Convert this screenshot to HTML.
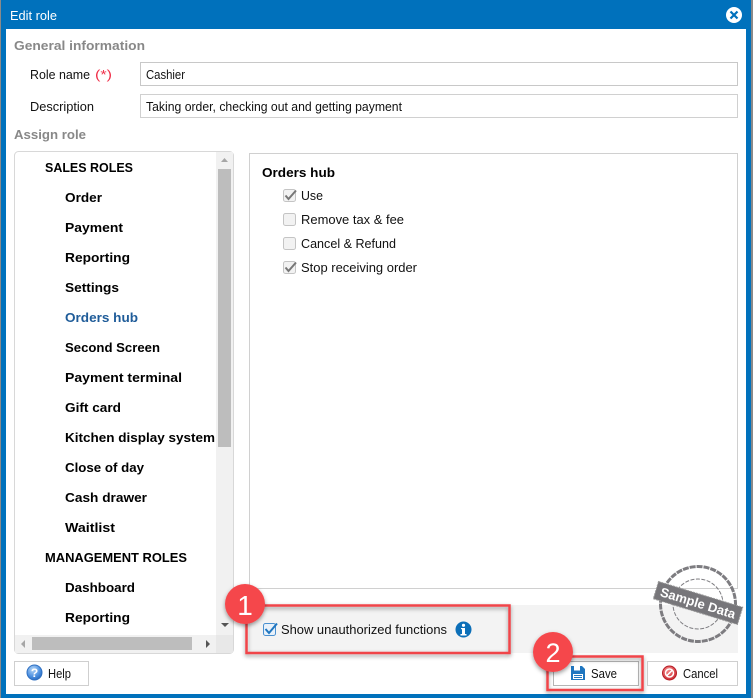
<!DOCTYPE html>
<html><head><meta charset="utf-8"><title>Edit role</title>
<style>
html,body{margin:0;padding:0;width:753px;height:698px;overflow:hidden;background:#fff}
svg{display:block}
text{font-family:"Liberation Sans",sans-serif;font-size:12.500px;fill:#111}
.b{font-weight:bold;font-size:13px;fill:#000}
.g{font-weight:bold;font-size:13px;fill:#888}
</style></head><body>
<svg width="753" height="698" viewBox="0 0 753 698" xmlns="http://www.w3.org/2000/svg">
<defs>
<filter id="sh" x="-20%" y="-20%" width="140%" height="140%"><feDropShadow dx="0" dy="2" stdDeviation="2" flood-color="#000" flood-opacity=".4"/></filter>
<radialGradient id="q" cx=".4" cy=".3" r=".8"><stop offset="0" stop-color="#b5d6f7"/><stop offset=".6" stop-color="#4b8fe0"/><stop offset="1" stop-color="#1f5fb5"/></radialGradient>
<radialGradient id="c" cx=".4" cy=".3" r=".8"><stop offset="0" stop-color="#f58a8a"/><stop offset="1" stop-color="#c8222a"/></radialGradient>
</defs>
<rect width="753" height="698" fill="#8a8a8a"/>
<rect x="1" y="0" width="750" height="698" fill="#0071bc"/>
<rect x="6" y="29" width="740" height="665" fill="#fff"/>
<text x="10" y="20" style="font-size:13px;fill:#fff" textLength="47" lengthAdjust="spacingAndGlyphs">Edit role</text>
<circle cx="734" cy="15" r="8" fill="#fff"/>
<path d="M730.500 11.500L737.500 18.500M737.500 11.500L730.500 18.500" stroke="#0071bc" stroke-width="2.200"/>

<text class="g" x="14" y="50" textLength="131" lengthAdjust="spacingAndGlyphs">General information</text>
<text x="30" y="79" textLength="60" lengthAdjust="spacingAndGlyphs">Role name</text>
<text x="95" y="79" style="fill:#f0304a" textLength="17" lengthAdjust="spacingAndGlyphs">(*)</text>
<rect x="140.500" y="62.500" width="597" height="23" fill="#fff" stroke="#c8c8c8"/>
<text x="146" y="79" textLength="39" lengthAdjust="spacingAndGlyphs">Cashier</text>
<text x="30" y="111" textLength="64" lengthAdjust="spacingAndGlyphs">Description</text>
<rect x="140.500" y="94.500" width="597" height="23" fill="#fff" stroke="#d0d0d0"/>
<text x="146" y="111" textLength="256" lengthAdjust="spacingAndGlyphs">Taking order, checking out and getting payment</text>
<text class="g" x="14" y="139" textLength="72" lengthAdjust="spacingAndGlyphs">Assign role</text>

<!-- left list -->
<rect x="14.500" y="151.500" width="219" height="502" rx="4" fill="#fff" stroke="#d8d8d8"/>
<rect x="216" y="152" width="17" height="483" fill="#f1f1f1"/>
<rect x="15" y="635" width="218" height="18" fill="#f1f1f1"/>
<rect x="216" y="635" width="17" height="18" fill="#e8e8e8"/>
<rect x="218" y="169" width="13" height="278" fill="#bdbdbd"/>
<rect x="32" y="637" width="160" height="13" fill="#bdbdbd"/>
<path d="M221 162L228 162L224.500 158Z" fill="#a6a6a6"/>
<path d="M221 623L229 623L225 627Z" fill="#555"/>
<path d="M25 640V648L21 644Z" fill="#a6a6a6"/>
<path d="M206 640V648L210 644Z" fill="#555"/>
<text class="b" x="45" y="172" textLength="88" lengthAdjust="spacingAndGlyphs">SALES ROLES</text>
<text class="b" x="65" y="202" textLength="37" lengthAdjust="spacingAndGlyphs">Order</text>
<text class="b" x="65" y="232" textLength="58" lengthAdjust="spacingAndGlyphs">Payment</text>
<text class="b" x="65" y="262" textLength="65" lengthAdjust="spacingAndGlyphs">Reporting</text>
<text class="b" x="65" y="292" textLength="54" lengthAdjust="spacingAndGlyphs">Settings</text>
<text class="b" x="65" y="322" textLength="73" lengthAdjust="spacingAndGlyphs" style="fill:#1f5c99">Orders hub</text>
<text class="b" x="65" y="352" textLength="95" lengthAdjust="spacingAndGlyphs">Second Screen</text>
<text class="b" x="65" y="382" textLength="117" lengthAdjust="spacingAndGlyphs">Payment terminal</text>
<text class="b" x="65" y="412" textLength="56" lengthAdjust="spacingAndGlyphs">Gift card</text>
<text class="b" x="65" y="442" textLength="150" lengthAdjust="spacingAndGlyphs">Kitchen display system</text>
<text class="b" x="65" y="472" textLength="79" lengthAdjust="spacingAndGlyphs">Close of day</text>
<text class="b" x="65" y="502" textLength="82" lengthAdjust="spacingAndGlyphs">Cash drawer</text>
<text class="b" x="65" y="532" textLength="50" lengthAdjust="spacingAndGlyphs">Waitlist</text>
<text class="b" x="45" y="562" textLength="142" lengthAdjust="spacingAndGlyphs">MANAGEMENT ROLES</text>
<text class="b" x="65" y="592" textLength="70" lengthAdjust="spacingAndGlyphs">Dashboard</text>
<text class="b" x="65" y="622" textLength="65" lengthAdjust="spacingAndGlyphs">Reporting</text>

<!-- right panel -->
<rect x="249.500" y="153.500" width="488" height="435" fill="#fff" stroke="#d0d0d0"/>
<rect x="249" y="605" width="489" height="48" fill="#f3f3f3"/>
<text class="b" x="262" y="177" textLength="73" lengthAdjust="spacingAndGlyphs">Orders hub</text>
<g fill="#f2f2f2" stroke="#c4c4c4">
<rect x="283.500" y="189.500" width="12" height="12" rx="2"/>
<rect x="283.500" y="213.500" width="12" height="12" rx="2"/>
<rect x="283.500" y="237.500" width="12" height="12" rx="2"/>
<rect x="283.500" y="261.500" width="12" height="12" rx="2"/>
</g>
<path d="M285.500 195.500L288.500 199L296 190.500M285.500 267.500L288.500 271L296 262.500" fill="none" stroke="#777" stroke-width="2"/>
<text x="301" y="200" textLength="22" lengthAdjust="spacingAndGlyphs">Use</text>
<text x="301" y="224" textLength="103" lengthAdjust="spacingAndGlyphs">Remove tax &amp; fee</text>
<text x="301" y="248" textLength="95" lengthAdjust="spacingAndGlyphs">Cancel &amp; Refund</text>
<text x="301" y="272" textLength="116" lengthAdjust="spacingAndGlyphs">Stop receiving order</text>

<!-- show unauthorized -->
<rect x="263.500" y="623.500" width="12" height="12" rx="2" fill="#e8f1fa" stroke="#4a90d0"/>
<path d="M265.500 629L269 633L277 623.500" fill="none" stroke="#1f76c0" stroke-width="2"/>
<text x="281" y="634" textLength="166" lengthAdjust="spacingAndGlyphs">Show unauthorized functions</text>
<circle cx="463.500" cy="629.500" r="8" fill="#0c6fb8"/>
<rect x="462" y="628" width="3" height="6.500" fill="#fff"/><rect x="460.500" y="634" width="6" height="1.500" fill="#fff"/><rect x="461" y="628" width="3" height="1.200" fill="#fff"/>
<circle cx="463.500" cy="625.300" r="1.600" fill="#fff"/>

<!-- stamp -->
<g fill="none" stroke="#7d7c80">
<circle cx="698" cy="604" r="37.500" stroke-width="3" stroke-dasharray="6 1"/>
<circle cx="698" cy="604" r="25" stroke-width="1" stroke-dasharray="4 1.500"/>
</g>
<g transform="rotate(17 698 603)">
<rect x="654" y="594" width="88" height="18" fill="#77767a" stroke="#999" stroke-dasharray="2 1"/>
<text x="698" y="607.500" text-anchor="middle" style="font-weight:bold;font-size:13px;fill:#fff" textLength="78" lengthAdjust="spacingAndGlyphs">Sample Data</text>
</g>

<!-- buttons -->
<rect x="14.500" y="661.500" width="74" height="24" fill="#fff" stroke="#cfcfcf"/>
<circle cx="34.500" cy="672.500" r="7.500" fill="url(#q)" stroke="#2e6fc0"/>
<text x="34.500" y="677" text-anchor="middle" style="font-weight:bold;font-size:12px;fill:#fff">?</text>
<text x="48" y="678" textLength="23" lengthAdjust="spacingAndGlyphs">Help</text>

<rect x="553.500" y="661.500" width="85" height="24" fill="#fff" stroke="#b5b5b5"/>
<path d="M571 666H582L585 669V680H571Z" fill="#1f76c0"/>
<rect x="574" y="666" width="6" height="4.500" fill="#fff"/>
<rect x="573" y="674" width="10" height="5" fill="#fff"/>
<path d="M574 675.500H582M574 677.500H582" stroke="#1f76c0"/>
<text x="591" y="678" textLength="26" lengthAdjust="spacingAndGlyphs">Save</text>

<rect x="647.500" y="661.500" width="90" height="24" fill="#fff" stroke="#cfcfcf"/>
<circle cx="669.500" cy="673" r="7" fill="url(#c)" stroke="#b51c24"/>
<circle cx="669.500" cy="673" r="4" fill="none" stroke="#fff" stroke-width="1.500"/>
<path d="M666.500 676L672.500 670" stroke="#fff" stroke-width="1.500"/>
<text x="683" y="678" textLength="35" lengthAdjust="spacingAndGlyphs">Cancel</text>

<!-- annotations -->
<rect x="246.500" y="605.500" width="263" height="47.500" fill="none" stroke="#f0454a" stroke-width="2.500" filter="url(#sh)"/>
<rect x="547.500" y="656.500" width="95" height="33.500" fill="none" stroke="#f0454a" stroke-width="2.500" filter="url(#sh)"/>
<circle cx="245" cy="604" r="20" fill="#f5464b" filter="url(#sh)"/>
<text x="245" y="615" text-anchor="middle" style="font-size:28px;fill:#fff">1</text>
<circle cx="553" cy="652" r="20" fill="#f5464b" filter="url(#sh)"/>
<text x="553" y="662" text-anchor="middle" style="font-size:27px;fill:#fff">2</text>
</svg>
</body></html>
